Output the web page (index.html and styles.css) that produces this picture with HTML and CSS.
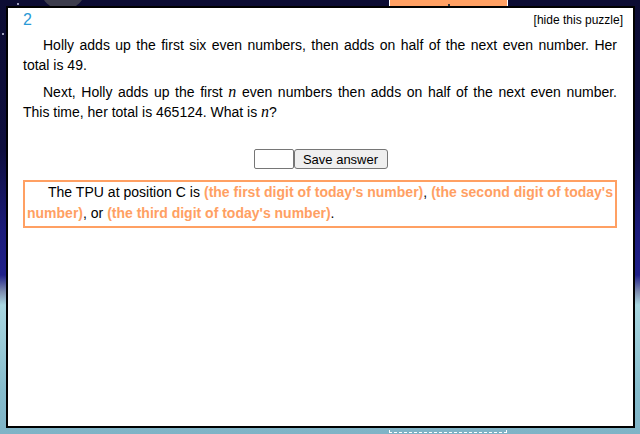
FILE: index.html
```html
<!DOCTYPE html>
<html>
<head>
<meta charset="utf-8">
<link rel="stylesheet" href="styles.css">
</head>
<body>
<div class="scene">
  <div class="moon"></div>
  <div class="star s1"></div>
  <div class="star s2"></div>
  <div class="tab"><span class="tick"></span></div>
  <div class="dashed"></div>
  <div class="modal">
    <div class="head">
      <span class="num">2</span>
      <span class="hide">[hide this puzzle]</span>
    </div>
    <p class="para">Holly adds up the first six even numbers, then adds on half of the next even number. Her total is 49.</p>
    <p class="para">Next, Holly adds up the first <i class="m">n</i> even numbers then adds on half of the next even number. This time, her total is 465124. What is <i class="m">n</i>?</p>
    <div class="answer">
      <input class="field" type="text"><button class="save">Save answer</button>
    </div>
    <div class="tpu">The TPU at position C is <b class="hl">(the first digit of today's number)</b>, <b class="hl">(the second digit of today's number)</b>, or <b class="hl">(the third digit of today's number)</b>.</div>
  </div>
</div>
</body>
</html>
```
FILE: styles.css
```css
html, body {
  margin: 0;
  padding: 0;
}
body {
  width: 640px;
  height: 434px;
  overflow: hidden;
  font-family: "Liberation Sans", Arial, sans-serif;
}
.scene {
  position: relative;
  width: 640px;
  height: 434px;
  padding: 6px 5px 6px 6px;
  box-sizing: border-box;
  background:
    linear-gradient(180deg,
      #0c0c33 0px,
      #0e0e3e 150px,
      #1b1b7a 230px,
      #20208a 275px,
      #7f8fb0 292px,
      #a8d6e0 305px,
      #9cccd8 340px,
      #86bccc 390px,
      #7fb3c6 434px);
}
.moon {
  position: absolute;
  left: 40px;
  top: -36px;
  width: 46px;
  height: 46px;
  border-radius: 50%;
  background: #3c3c4c;
}
.star {
  position: absolute;
  width: 2px;
  height: 2px;
  background: #cfd0e8;
  border-radius: 50%;
}
.s1 { left: 17px; top: 3px; }
.s2 { left: 2px; top: 33px; }
.tab {
  position: absolute;
  left: 389px;
  top: -2px;
  width: 117px;
  height: 7px;
  background: #ffa063;
  border: 1px solid #fff;
}
.tick {
  position: absolute;
  left: 58px;
  top: 5px;
  width: 2px;
  height: 2px;
  background: #333;
}
.dashed {
  position: absolute;
  left: 389px;
  top: 420px;
  width: 116px;
  height: 11px;
  border: 1px dashed #fff;
}
.modal {
  position: relative;
  height: 100%;
  box-sizing: border-box;
  background: #fff;
  border: 2px solid #000;
  padding: 0 16px 0 15px;
}
.head {
  display: flex;
  justify-content: space-between;
  align-items: flex-start;
  padding-top: 3px;
  margin-right: -6px;
}
.num {
  color: #2a9ad6;
  font-size: 16px;
  line-height: 18px;
}
.hide {
  font-size: 12px;
  line-height: 16px;
  color: #000;
  padding-top: 1px;
}
.para {
  margin: 6px 0 7px;
  font-size: 14px;
  line-height: 20px;
  text-align: justify;
  text-indent: 20px;
  color: #000;
}
.m {
  font-family: "Liberation Serif", "Times New Roman", serif;
  font-style: italic;
  font-size: 16px;
}
.answer {
  display: flex;
  justify-content: center;
  margin-top: 27px;
  padding-left: 1px;
}
.field {
  width: 40px;
  height: 20px;
  box-sizing: border-box;
  border: 1px solid #767676;
  border-radius: 2px;
  padding: 0;
  margin: 0;
}
.save {
  width: 94px;
  height: 20px;
  box-sizing: border-box;
  font-family: "Liberation Sans", Arial, sans-serif;
  font-size: 13px;
  border: 1px solid #767676;
  border-radius: 3px;
  background: #efefef;
  padding: 0;
  margin: 0;
  color: #000;
}
.tpu {
  margin-top: 11px;
  border: 2px solid #ffa063;
  padding: 0 2px 2px;
  font-size: 14px;
  line-height: 21px;
  text-indent: 21px;
  text-align: justify;
  color: #000;
}
.hl {
  color: #ffa063;
}
```
